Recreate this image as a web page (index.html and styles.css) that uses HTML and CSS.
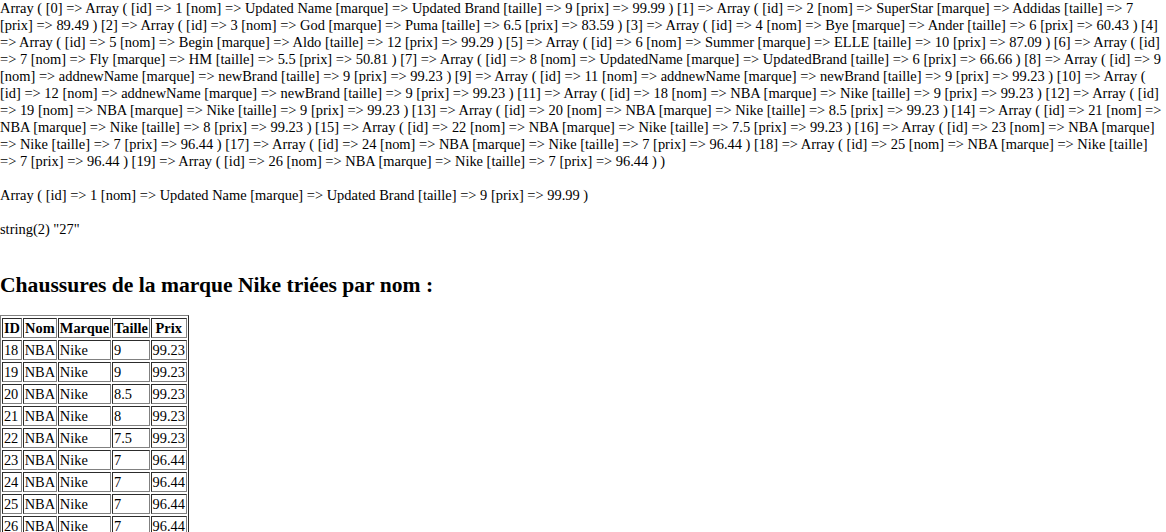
FILE: index.html
```html
<!DOCTYPE html>
<html>
<head>
<meta charset="utf-8">
<title>Chaussures</title>
<link rel="stylesheet" href="styles.css">
</head>
<body>
<div class="dump">Array ( [0] =&gt; Array ( [id] =&gt; 1 [nom] =&gt; Updated Name [marque] =&gt; Updated Brand [taille] =&gt; 9 [prix] =&gt; 99.99 ) [1] =&gt; Array ( [id] =&gt; 2 [nom] =&gt; SuperStar [marque] =&gt; Addidas [taille] =&gt; 7<br>[prix] =&gt; 89.49 ) [2] =&gt; Array ( [id] =&gt; 3 [nom] =&gt; God [marque] =&gt; Puma [taille] =&gt; 6.5 [prix] =&gt; 83.59 ) [3] =&gt; Array ( [id] =&gt; 4 [nom] =&gt; Bye [marque] =&gt; Ander [taille] =&gt; 6 [prix] =&gt; 60.43 ) [4]<br>=&gt; Array ( [id] =&gt; 5 [nom] =&gt; Begin [marque] =&gt; Aldo [taille] =&gt; 12 [prix] =&gt; 99.29 ) [5] =&gt; Array ( [id] =&gt; 6 [nom] =&gt; Summer [marque] =&gt; ELLE [taille] =&gt; 10 [prix] =&gt; 87.09 ) [6] =&gt; Array ( [id]<br>=&gt; 7 [nom] =&gt; Fly [marque] =&gt; HM [taille] =&gt; 5.5 [prix] =&gt; 50.81 ) [7] =&gt; Array ( [id] =&gt; 8 [nom] =&gt; UpdatedName [marque] =&gt; UpdatedBrand [taille] =&gt; 6 [prix] =&gt; 66.66 ) [8] =&gt; Array ( [id] =&gt; 9<br>[nom] =&gt; addnewName [marque] =&gt; newBrand [taille] =&gt; 9 [prix] =&gt; 99.23 ) [9] =&gt; Array ( [id] =&gt; 11 [nom] =&gt; addnewName [marque] =&gt; newBrand [taille] =&gt; 9 [prix] =&gt; 99.23 ) [10] =&gt; Array (<br>[id] =&gt; 12 [nom] =&gt; addnewName [marque] =&gt; newBrand [taille] =&gt; 9 [prix] =&gt; 99.23 ) [11] =&gt; Array ( [id] =&gt; 18 [nom] =&gt; NBA [marque] =&gt; Nike [taille] =&gt; 9 [prix] =&gt; 99.23 ) [12] =&gt; Array ( [id]<br>=&gt; 19 [nom] =&gt; NBA [marque] =&gt; Nike [taille] =&gt; 9 [prix] =&gt; 99.23 ) [13] =&gt; Array ( [id] =&gt; 20 [nom] =&gt; NBA [marque] =&gt; Nike [taille] =&gt; 8.5 [prix] =&gt; 99.23 ) [14] =&gt; Array ( [id] =&gt; 21 [nom] =&gt;<br>NBA [marque] =&gt; Nike [taille] =&gt; 8 [prix] =&gt; 99.23 ) [15] =&gt; Array ( [id] =&gt; 22 [nom] =&gt; NBA [marque] =&gt; Nike [taille] =&gt; 7.5 [prix] =&gt; 99.23 ) [16] =&gt; Array ( [id] =&gt; 23 [nom] =&gt; NBA [marque]<br>=&gt; Nike [taille] =&gt; 7 [prix] =&gt; 96.44 ) [17] =&gt; Array ( [id] =&gt; 24 [nom] =&gt; NBA [marque] =&gt; Nike [taille] =&gt; 7 [prix] =&gt; 96.44 ) [18] =&gt; Array ( [id] =&gt; 25 [nom] =&gt; NBA [marque] =&gt; Nike [taille]<br>=&gt; 7 [prix] =&gt; 96.44 ) [19] =&gt; Array ( [id] =&gt; 26 [nom] =&gt; NBA [marque] =&gt; Nike [taille] =&gt; 7 [prix] =&gt; 96.44 ) )</div>
<p class="single">Array ( [id] =&gt; 1 [nom] =&gt; Updated Name [marque] =&gt; Updated Brand [taille] =&gt; 9 [prix] =&gt; 99.99 )</p>
<p class="vardump">string(2) "27"</p>
<h2 class="title">Chaussures de la marque Nike triées par nom :</h2>
<table class="grid">
<tr><th>ID</th><th>Nom</th><th>Marque</th><th>Taille</th><th>Prix</th></tr>
<tr><td>18</td><td>NBA</td><td>Nike</td><td>9</td><td>99.23</td></tr>
<tr><td>19</td><td>NBA</td><td>Nike</td><td>9</td><td>99.23</td></tr>
<tr><td>20</td><td>NBA</td><td>Nike</td><td>8.5</td><td>99.23</td></tr>
<tr><td>21</td><td>NBA</td><td>Nike</td><td>8</td><td>99.23</td></tr>
<tr><td>22</td><td>NBA</td><td>Nike</td><td>7.5</td><td>99.23</td></tr>
<tr><td>23</td><td>NBA</td><td>Nike</td><td>7</td><td>96.44</td></tr>
<tr><td>24</td><td>NBA</td><td>Nike</td><td>7</td><td>96.44</td></tr>
<tr><td>25</td><td>NBA</td><td>Nike</td><td>7</td><td>96.44</td></tr>
<tr><td>26</td><td>NBA</td><td>Nike</td><td>7</td><td>96.44</td></tr>
</table>
</body>
</html>
```
FILE: styles.css
```css
html {
  background: #ffffff;
}
body {
  margin: 0;
  color: #000000;
  font-family: "Liberation Serif", "Times New Roman", serif;
  font-size: 14.45px;
  line-height: 17px;
}
.dump {
  margin: 0;
}
.single {
  margin: 17px 0 0;
}
.vardump {
  margin: 17px 0 0;
}
.title {
  margin: 35px 0 0;
  font-size: 21.6px;
  line-height: 25px;
  font-weight: bold;
}
.grid {
  margin-top: 17px;
  border: 1px outset #808080;
  border-spacing: 1.8px 2px;
  border-collapse: separate;
  font-size: 14.4px;
}
.grid th,
.grid td {
  border: 1px inset #808080;
  padding: 1px 0.9px;
  line-height: 16px;
  text-align: left;
}
.grid th {
  text-align: center;
  font-weight: bold;
}
```
